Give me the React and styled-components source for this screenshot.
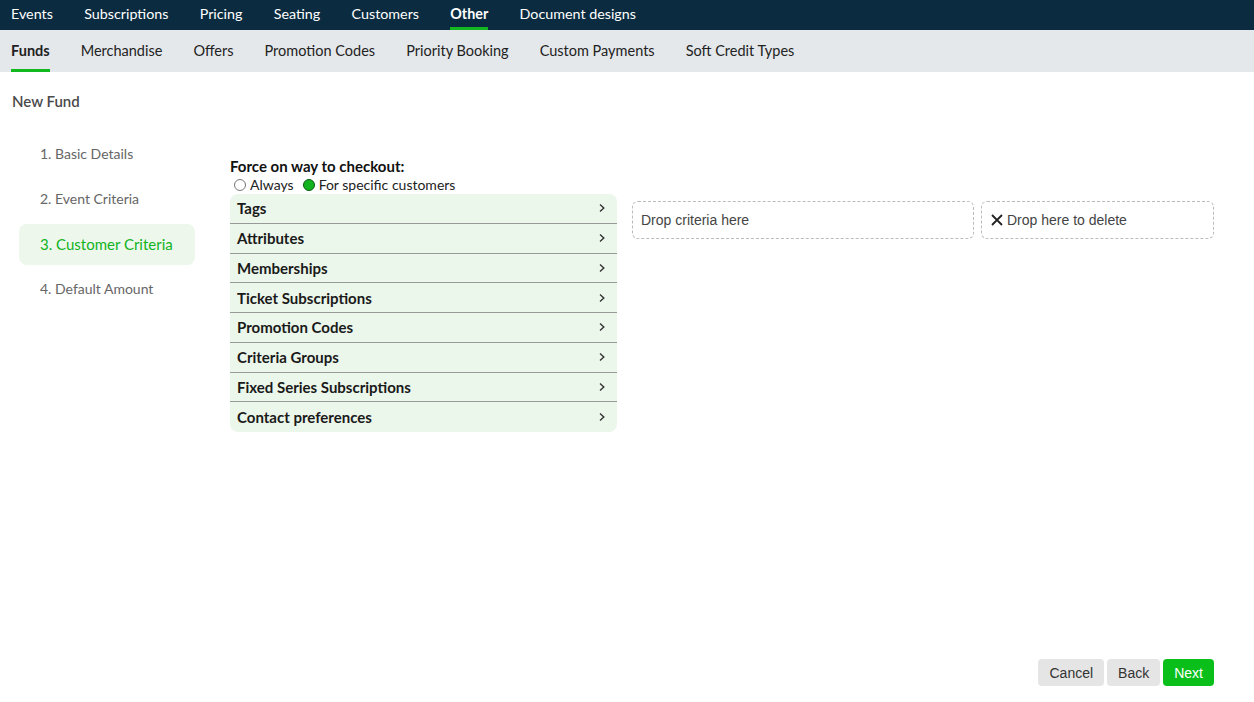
import React, { useState } from "react";
import styled, { createGlobalStyle } from "styled-components";

const GlobalStyle = createGlobalStyle`
  html, body {
    margin: 0;
    padding: 0;
    background: #fff;
    font-family: Lato, "Noto Sans", sans-serif;
    color: #222;
  }
  * { box-sizing: border-box; }
`;

const topLinks = ["Events", "Subscriptions", "Pricing", "Seating", "Customers", "Other", "Document designs"];
const subLinks = ["Funds", "Merchandise", "Offers", "Promotion Codes", "Priority Booking", "Custom Payments", "Soft Credit Types"];
const steps = ["1. Basic Details", "2. Event Criteria", "3. Customer Criteria", "4. Default Amount"];
const criteria = [
  "Tags",
  "Attributes",
  "Memberships",
  "Ticket Subscriptions",
  "Promotion Codes",
  "Criteria Groups",
  "Fixed Series Subscriptions",
  "Contact preferences",
];

const Chevron = () => (
  <svg width="10" height="10" viewBox="0 0 10 10">
    <path d="M3 1.5 L6.8 5 L3 8.5" fill="none" stroke="#333" strokeWidth="1.4" />
  </svg>
);

const Cross = () => (
  <svg width="14" height="14" viewBox="0 0 14 14">
    <path d="M2 2 L12 12 M12 2 L2 12" stroke="#222" strokeWidth="1.8" />
  </svg>
);

const App = () => {
  const [mode, setMode] = useState("specific");
  return (
    <Page>
      <GlobalStyle />
      <TopNav>
        {topLinks.map((name) => (
          <TopLink key={name} $active={name === "Other"}>
            {name}
          </TopLink>
        ))}
      </TopNav>
      <SubNav>
        {subLinks.map((name) => (
          <SubLink key={name} $active={name === "Funds"}>
            {name}
          </SubLink>
        ))}
      </SubNav>
      <Title>New Fund</Title>
      <Body>
        <Steps>
          {steps.map((s, i) => (
            <Step key={s} $active={i === 2}>
              {s}
            </Step>
          ))}
        </Steps>
        <Content>
          <Label>Force on way to checkout:</Label>
          <RadioRow>
            <RadioOpt onClick={() => setMode("always")}>
              <Radio $checked={mode === "always"} />
              Always
            </RadioOpt>
            <RadioOpt onClick={() => setMode("specific")}>
              <Radio $checked={mode === "specific"} />
              For specific customers
            </RadioOpt>
          </RadioRow>
          <Builder>
            <CriteriaList>
              {criteria.map((c) => (
                <CriteriaRow key={c}>
                  {c}
                  <Chevron />
                </CriteriaRow>
              ))}
            </CriteriaList>
            <DropZone $wide>Drop criteria here</DropZone>
            <DropZone>
              <Cross />
              Drop here to delete
            </DropZone>
          </Builder>
        </Content>
      </Body>
      <Footer>
        <Button>Cancel</Button>
        <Button>Back</Button>
        <Button $primary>Next</Button>
      </Footer>
    </Page>
  );
};

const Page = styled.div`
  display: flex;
  flex-direction: column;
  min-height: 702px;
`;

const TopNav = styled.nav`
  display: flex;
  height: 30px;
  background: #0b2c40;
  padding: 0 0 0 11px;
  gap: 31.3px;
`;

const TopLink = styled.div`
  color: #fff;
  font-size: 14.3px;
  font-weight: ${(p) => (p.$active ? 700 : 400)};
  line-height: 28px;
  border-bottom: 3px solid ${(p) => (p.$active ? "#12b81f" : "transparent")};
  height: 30px;
`;

const SubNav = styled.nav`
  display: flex;
  height: 42px;
  background: #e5e8eb;
  padding: 0 0 0 11px;
  gap: 31px;
`;

const SubLink = styled.div`
  color: #222;
  font-size: 14.5px;
  font-weight: ${(p) => (p.$active ? 700 : 400)};
  line-height: 42px;
  height: 42px;
  border-bottom: 3px solid ${(p) => (p.$active ? "#12b81f" : "transparent")};
`;

const Title = styled.h1`
  margin: 0;
  padding: 19px 12px 0;
  font-size: 15px;
  font-weight: 600;
  color: #4a4a4a;
  line-height: 20px;
`;

const Body = styled.div`
  display: flex;
  padding: 23px 0 0 19px;
  flex: 1;
`;

const Steps = styled.div`
  width: 176px;
  display: flex;
  flex-direction: column;
  gap: 4px;
  margin-right: 35px;
`;

const Step = styled.div`
  height: 41px;
  line-height: 40px;
  padding-left: 21px;
  font-size: ${(p) => (p.$active ? "15px" : "14px")};
  border-radius: 8px;
  color: ${(p) => (p.$active ? "#12b31e" : "#666")};
  background: ${(p) => (p.$active ? "#edf7ec" : "transparent")};
`;

const Content = styled.div`
  display: flex;
  flex-direction: column;
  padding-top: 22px;
`;

const Label = styled.div`
  font-size: 15px;
  font-weight: 700;
  color: #111;
  line-height: 20px;
`;

const RadioRow = styled.div`
  display: flex;
  gap: 9px;
  font-size: 14px;
  color: #222;
  line-height: 18px;
  padding-left: 4px;
`;

const RadioOpt = styled.label`
  display: flex;
  align-items: center;
  gap: 4px;
  cursor: pointer;
`;

const Radio = styled.span`
  width: 12px;
  height: 12px;
  border-radius: 50%;
  border: 1px solid ${(p) => (p.$checked ? "#0a5d12" : "#777")};
  background: ${(p) => (p.$checked ? "#12b31e" : "#fff")};
`;

const Builder = styled.div`
  display: flex;
  align-items: flex-start;
  gap: 7px;
`;

const CriteriaList = styled.div`
  width: 387px;
  background: #ecf7eb;
  border-radius: 8px;
  overflow: hidden;
  margin-right: 8px;
`;

const CriteriaRow = styled.div`
  display: flex;
  align-items: center;
  justify-content: space-between;
  height: 29.75px;
  padding: 0 10px 0 7px;
  font-size: 15px;
  font-weight: 700;
  color: #1a1a1a;
  border-bottom: 1px solid #999;
  &:last-child {
    border-bottom: none;
  }
`;

const DropZone = styled.div`
  display: flex;
  align-items: center;
  gap: 3px;
  margin-top: 7px;
  width: ${(p) => (p.$wide ? "342px" : "233px")};
  height: 38px;
  padding: 0 8px;
  border: 1px dashed #bbb;
  border-radius: 6px;
  font-family: "Liberation Sans", Arial, sans-serif;
  font-size: 14px;
  color: #444;
`;

const Footer = styled.div`
  display: flex;
  justify-content: flex-end;
  gap: 3px;
  padding: 0 40px 16px 0;
`;

const Button = styled.button`
  height: 27px;
  padding: 0 11px;
  border: none;
  border-radius: 4px;
  font-family: "Liberation Sans", Arial, sans-serif;
  font-size: 14px;
  color: ${(p) => (p.$primary ? "#fff" : "#333")};
  background: ${(p) => (p.$primary ? "#0bbf1b" : "#e5e5e5")};
  cursor: pointer;
`;

export default App;
